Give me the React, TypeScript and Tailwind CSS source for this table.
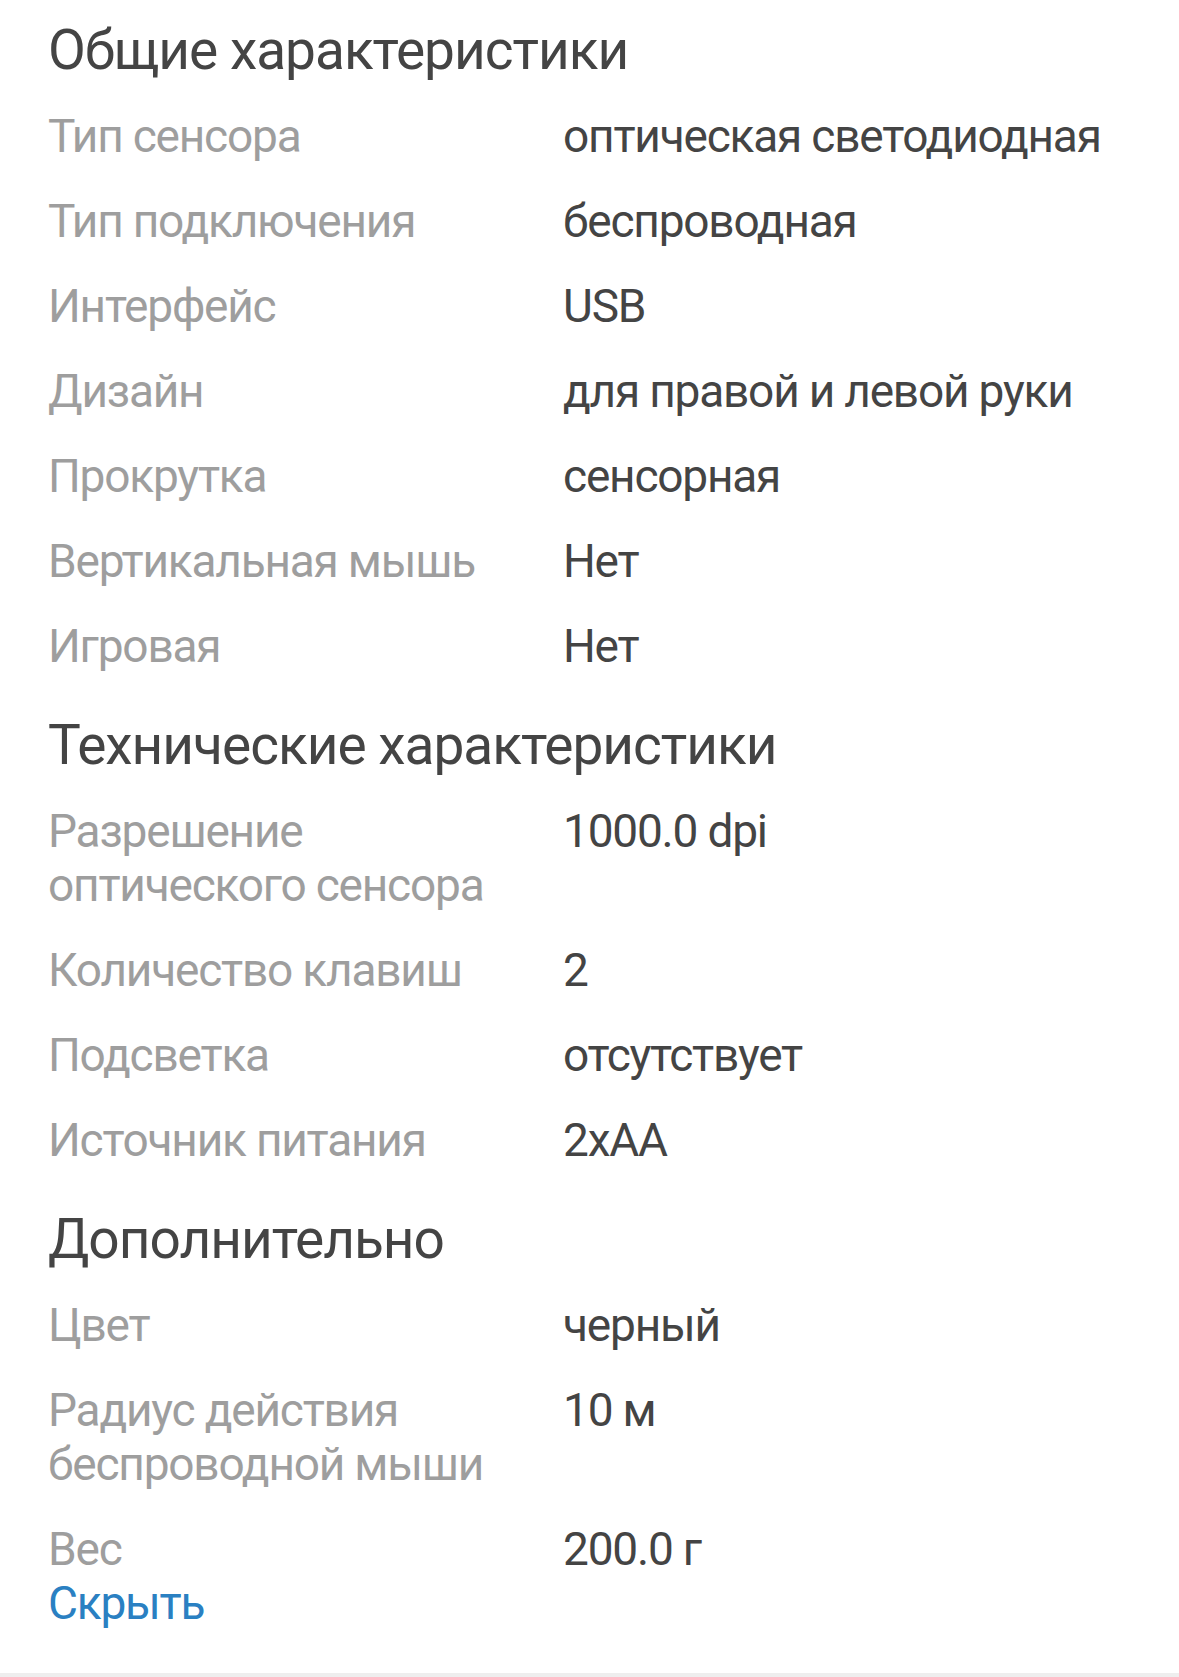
const sections = [
  {
    title: 'Общие характеристики',
    rows: [
      ['Тип сенсора', 'оптическая светодиодная'],
      ['Тип подключения', 'беспроводная'],
      ['Интерфейс', 'USB'],
      ['Дизайн', 'для правой и левой руки'],
      ['Прокрутка', 'сенсорная'],
      ['Вертикальная мышь', 'Нет'],
      ['Игровая', 'Нет'],
    ],
  },
  {
    title: 'Технические характеристики',
    rows: [
      ['Разрешение оптического сенсора', '1000.0 dpi'],
      ['Количество клавиш', '2'],
      ['Подсветка', 'отсутствует'],
      ['Источник питания', '2xAA'],
    ],
  },
  {
    title: 'Дополнительно',
    rows: [
      ['Цвет', 'черный'],
      ['Радиус действия беспроводной мыши', '10 м'],
      ['Вес', '200.0 г'],
    ],
  },
];

export default function App() {
  return (
    <div className="min-h-screen bg-white font-['Roboto',sans-serif] flex flex-col">
      <div className="px-[48px] pt-[20px] pb-[42px]">
        {sections.map((s, si) => (
          <section key={s.title} className={si > 0 ? 'mt-[27px]' : ''}>
            <h2 className="text-[55px] leading-[60px] tracking-[-1px] text-[#444444] mb-[13px]">{s.title}</h2>
            {s.rows.map(([label, value], ri) => {
              const last = si === sections.length - 1 && ri === s.rows.length - 1;
              return (
                <div key={label} className={`flex text-[46px] leading-[54px] tracking-[-1.2px] pt-[15.5px] ${last ? '' : 'pb-[15.5px]'}`}>
                  <div className="w-[515px] pr-[40px] text-[#9e9e9e]">{label}</div>
                  <div className="flex-1 text-[#444444]">{value}</div>
                </div>
              );
            })}
          </section>
        ))}
        <button className="block text-[46px] leading-[54px] tracking-[-1.2px] text-[#2a80c2]">Скрыть</button>
      </div>
      <div className="h-[4px] bg-[#eeeeee] mt-auto" />
    </div>
  );
}
